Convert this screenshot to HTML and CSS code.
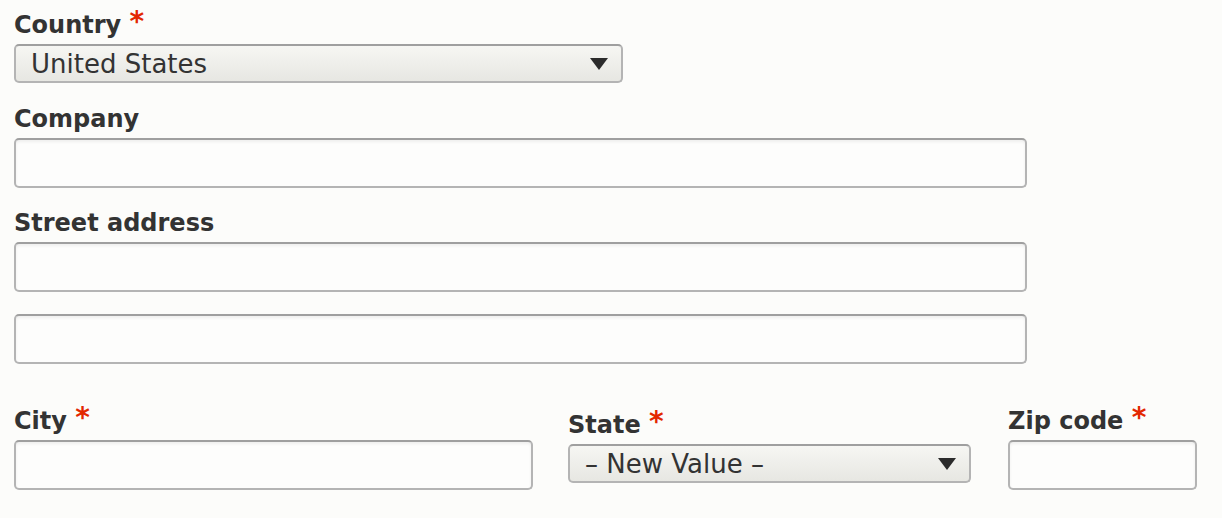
FILE: index.html
```html
<!DOCTYPE html>
<html lang="en">
<head>
    <meta charset="UTF-8">
    <meta name="viewport" content="width=device-width, initial-scale=1.0">
    <title>Address</title>
    <link rel="stylesheet" href="styles.css">
</head>
<body>
<form class="address-form">
    <div class="form-item form-item--country">
        <label for="country">Country <span class="required">*</span></label>
        <div class="select-wrap select-wrap--country">
            <select id="country" name="country">
                <option>United States</option>
            </select>
            <svg class="select-arrow" width="18" height="12" viewBox="0 0 18 12"><path d="M0 0H18L9 12Z" fill="#2b2b2b"/></svg>
        </div>
    </div>

    <div class="form-item form-item--company">
        <label for="company">Company</label>
        <input type="text" id="company" name="company" class="input-wide">
    </div>

    <div class="form-item">
        <label for="street1">Street address</label>
        <input type="text" id="street1" name="street1" class="input-wide">
        <input type="text" id="street2" name="street2" class="input-wide input-second">
    </div>

    <div class="address-row">
        <div class="form-item form-item--city">
            <label for="city">City <span class="required">*</span></label>
            <input type="text" id="city" name="city">
        </div>
        <div class="form-item form-item--state">
            <label for="state">State <span class="required">*</span></label>
            <div class="select-wrap">
                <select id="state" name="state">
                    <option>&ndash; New Value &ndash;</option>
                </select>
                <svg class="select-arrow" width="18" height="12" viewBox="0 0 18 12"><path d="M0 0H18L9 12Z" fill="#2b2b2b"/></svg>
            </div>
        </div>
        <div class="form-item form-item--zip">
            <label for="zip">Zip code <span class="required">*</span></label>
            <input type="text" id="zip" name="zip">
        </div>
    </div>
</form>
</body>
</html>
```

FILE: styles.css
```css
body {
    margin: 0;
    padding: 11px 14px 0;
    background-color: #fcfcfa;
    font-family: 'DejaVu Sans', sans-serif;
    color: #333;
}

.form-item {
    margin-bottom: 20px;
}

.form-item--country {
    margin-bottom: 22px;
}

.form-item--company {
    margin-bottom: 21px;
}

label {
    display: block;
    font-size: 24px;
    font-weight: bold;
    line-height: 28px;
    margin-bottom: 5px;
    color: #333;
}

.required {
    color: #e32700;
    font-size: 28px;
    line-height: 0;
    vertical-align: 2px;
}

input, select {
    display: block;
    box-sizing: border-box;
    width: 100%;
    margin: 0;
    border: 2px solid #b4b4b4;
    border-top-color: #9f9f9f;
    border-radius: 5px;
    font-family: 'DejaVu Sans', sans-serif;
    color: #333;
    outline: none;
}

input {
    height: 50px;
    background-color: #fdfdfc;
    box-shadow: inset 0 2px 3px rgba(0, 0, 0, 0.06);
}

.input-wide {
    width: 1013px;
}

.input-second {
    margin-top: 22px;
}

.select-wrap {
    position: relative;
}

.select-wrap--country {
    width: 609px;
}

select {
    appearance: none;
    -webkit-appearance: none;
    height: 39px;
    padding: 0 40px 0 15px;
    font-size: 26px;
    background: linear-gradient(#f6f6f3, #e7e7e2);
}

.select-arrow {
    position: absolute;
    right: 15px;
    top: 14px;
}

.address-row {
    display: flex;
    margin-top: 43px;
}

.form-item--city {
    width: 519px;
    margin-right: 35px;
}

.form-item--state {
    width: 403px;
    margin-right: 37px;
    padding-top: 4px;
}

.form-item--zip {
    width: 189px;
}
```
